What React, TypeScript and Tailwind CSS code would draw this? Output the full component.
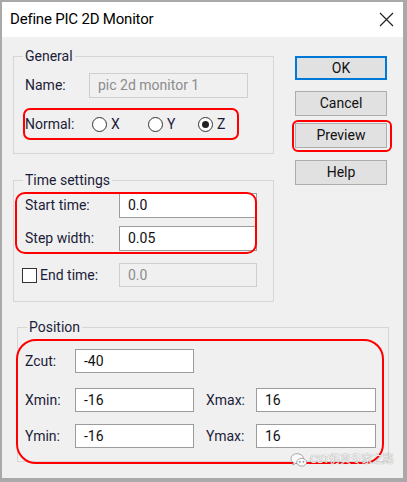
const font = { fontFamily: "Roboto, 'Liberation Sans', 'Noto Sans CJK SC', sans-serif" };

const Input = ({ value, w, h = 25, disabled = false }: { value: string; w: string; h?: number; disabled?: boolean }) => (
  <div
    className={`${w} ${h === 24 ? "h-[24px]" : "h-[25px]"} flex items-center pl-[8px] text-[14px] border ${
      disabled ? "bg-[#f0f0f0] border-[#cfcfcf] text-[#8c8c8c]" : "bg-white border-[#9c9c9c] text-[#111]"
    }`}
  >
    {value}
  </div>
);

const Radio = ({ label, checked, w }: { label: string; checked?: boolean; w: string }) => (
  <div className={`${w} flex items-center gap-[4px]`}>
    <div className="w-[15px] h-[15px] rounded-full border border-[#333] bg-white flex items-center justify-center">
      {checked && <div className="w-[7px] h-[7px] rounded-full bg-[#222]" />}
    </div>
    <span>{label}</span>
  </div>
);

const Button = ({ label, primary }: { label: string; primary?: boolean }) => (
  <div
    className={`w-[92px] flex items-center justify-center text-[14px] text-[#111] bg-[#e1e1e1] ${
      primary ? "h-[24px] border-2 border-[#0078d7]" : "h-[25px] border border-[#adadad]"
    }`}
  >
    {label}
  </div>
);

const Group = ({ title, className, children }: { title: string; className: string; children: React.ReactNode }) => (
  <div className={`relative border border-[#d6d6d6] ${className}`}>
    <span className="absolute left-[9px] -top-[9px] px-[2px] bg-[#f0f0f0] leading-[16px] text-[14px] text-[#1c1c3a]">
      {title}
    </span>
    {children}
  </div>
);

export default function App() {
  return (
    <div className="w-[407px] h-[482px] bg-[#a9a9a9] pt-[2px] pl-[2px] pr-[4px] pb-[4px] flex flex-col" style={font}>
      <div className="h-[35px] bg-white flex items-center justify-between pl-[8px] pr-[9px]">
        <span className="text-[15px] tracking-[-0.2px] text-black">Define PIC 2D Monitor</span>
        <svg width="15" height="15" viewBox="0 0 15 15">
          <path d="M1 1 L14 14 M14 1 L1 14" stroke="#222" strokeWidth="1.2" />
        </svg>
      </div>

      <div className="flex-1 bg-[#f0f0f0] relative pl-[11px] text-[14px] text-[#1c1c3a]">
        <div className="flex">
          <div className="w-[261px] mt-[19px] flex flex-col">
            <Group title="General" className="h-[98px] pt-[16px] pl-[11px]">
              <div className="flex items-center h-[25px]">
                <span className="w-[64px]">Name:</span>
                <Input value="pic 2d monitor 1" w="w-[159px]" disabled />
              </div>
              <div className="flex items-center h-[32px] mt-[10px]">
                <span className="w-[67px]">Normal:</span>
                <Radio label="X" w="w-[56px]" />
                <Radio label="Y" w="w-[50px]" />
                <Radio label="Z" w="w-[40px]" checked />
              </div>
            </Group>

            <Group title="Time settings" className="h-[122px] mt-[26px] pt-[12px] pl-[11px]">
              <div className="flex items-center h-[25px]">
                <span className="w-[94px]">Start time:</span>
                <Input value="0.0" w="w-[138px]" />
              </div>
              <div className="flex items-center h-[25px] mt-[8px]">
                <span className="w-[94px]">Step width:</span>
                <Input value="0.05" w="w-[138px]" />
              </div>
              <div className="flex items-center h-[24px] mt-[12px] -ml-[3px]">
                <div className="w-[15px] h-[15px] border border-[#333] bg-white mr-[3px]" />
                <span className="w-[79px]">End time:</span>
                <Input value="0.0" w="w-[138px]" h={24} disabled />
              </div>
            </Group>
          </div>

          <div className="ml-[21px] mt-[19px] flex flex-col">
            <Button label="OK" primary />
            <div className="mt-[11px]">
              <Button label="Cancel" />
            </div>
            <div className="mt-[7px]">
              <Button label="Preview" />
            </div>
            <div className="mt-[12px]">
              <Button label="Help" />
            </div>
          </div>
        </div>

        <Group title="Position" className="ml-[4px] mt-[25px] w-[372px] h-[135px] pt-[21px] pl-[7px]">
          <div className="flex items-center h-[24px]">
            <span className="w-[50px]">Zcut:</span>
            <Input value="-40" w="w-[119px]" h={24} />
          </div>
          <div className="flex items-center h-[24px] mt-[15px]">
            <span className="w-[50px]">Xmin:</span>
            <Input value="-16" w="w-[119px]" h={24} />
            <span className="w-[50px] ml-[12px]">Xmax:</span>
            <Input value="16" w="w-[120px]" h={24} />
          </div>
          <div className="flex items-center h-[24px] mt-[12px]">
            <span className="w-[50px]">Ymin:</span>
            <Input value="-16" w="w-[119px]" h={24} />
            <span className="w-[50px] ml-[12px]">Ymax:</span>
            <Input value="16" w="w-[120px]" h={24} />
          </div>
        </Group>

        {/* red annotation outlines drawn over the dialog */}
        <div className="absolute left-[21px] top-[71px] w-[216px] h-[32px] rounded-[7px] border-2 border-[#ff0000]" />
        <div className="absolute left-[290px] top-[83px] w-[100px] h-[32px] rounded-[6px] border-2 border-[#ff0000]" />
        <div className="absolute left-[13px] top-[155px] w-[242px] h-[62px] rounded-[10px] border-2 border-[#ff0000]" />
        <div className="absolute left-[14px] top-[302px] w-[368px] h-[125px] rounded-[20px] border-2 border-[#ff0000]" />

        {/* watermark */}
        <div className="absolute left-[288px] top-[415px] flex items-center gap-[2px] whitespace-nowrap text-[11px] leading-[14px] tracking-[-0.3px] text-[#f4f4f4] [text-shadow:0_0_1px_#777]">
          <svg width="18" height="16" viewBox="0 0 20 17" fill="#fafafa" stroke="#8a8a8a" strokeWidth="0.8">
            <ellipse cx="8" cy="7" rx="7" ry="5.5" />
            <path d="M4 11 L3 14 L7 12" />
            <ellipse cx="13" cy="11" rx="5.5" ry="4.3" />
            <circle cx="11" cy="10.5" r="0.6" fill="#8a8a8a" />
            <circle cx="15" cy="10.5" r="0.6" fill="#8a8a8a" />
          </svg>
          <span>CST仿真专家之路</span>
        </div>
      </div>
    </div>
  );
}
